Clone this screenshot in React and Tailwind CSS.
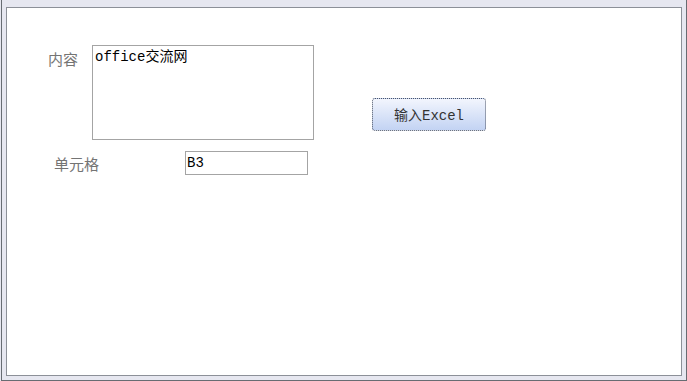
import React from 'react';

const CJK = { fontFamily: '"Noto Sans CJK SC", "Liberation Sans", sans-serif' };
const MIXED = { fontFamily: '"Liberation Mono", "Noto Sans CJK SC", monospace' };

export default function App() {
    return (
        <div className="w-[687px] h-[381px] bg-[#e6e7f0] pl-px flex">
            <div className="flex-1 flex border-l border-r border-b border-[#676c72] pl-[4px] pt-[7px] pr-[4px] pb-[4px]">
                <div className="flex-1 bg-white border border-[#8c9098] pl-[41px] pt-[37px]">
                    {/* 内容 row */}
                    <div className="flex items-start">
                        <div className="w-[44px] pt-[6px] text-[15px] leading-[15px] text-[#747474]" style={CJK}>
                            内容
                        </div>
                        <div className="w-[222px] h-[95px] border border-[#a4a4a4] pl-[2px] pt-[3px] text-[14px] leading-[16px] text-black" style={MIXED}>
                            office交流网
                        </div>
                        <div
                            className="ml-[58px] mt-[53px] w-[114px] h-[33px] pt-[3px] rounded-[3px] border border-dotted border-[#4d5566] bg-gradient-to-b from-[#f2f5fd] to-[#c3d3f3] flex items-center justify-center text-[14px] text-[#333333]"
                            style={MIXED}
                        >
                            输入Excel
                        </div>
                    </div>

                    {/* 单元格 row */}
                    <div className="flex items-start mt-[11px] pl-[6px]">
                        <div className="w-[131px] pt-[5px] text-[15px] leading-[15px] text-[#747474]" style={CJK}>
                            单元格
                        </div>
                        <div className="w-[123px] h-[24px] border border-[#a4a4a4] pl-px flex items-center text-[14px] text-black" style={MIXED}>
                            B3
                        </div>
                    </div>
                </div>
            </div>
        </div>
    );
}
